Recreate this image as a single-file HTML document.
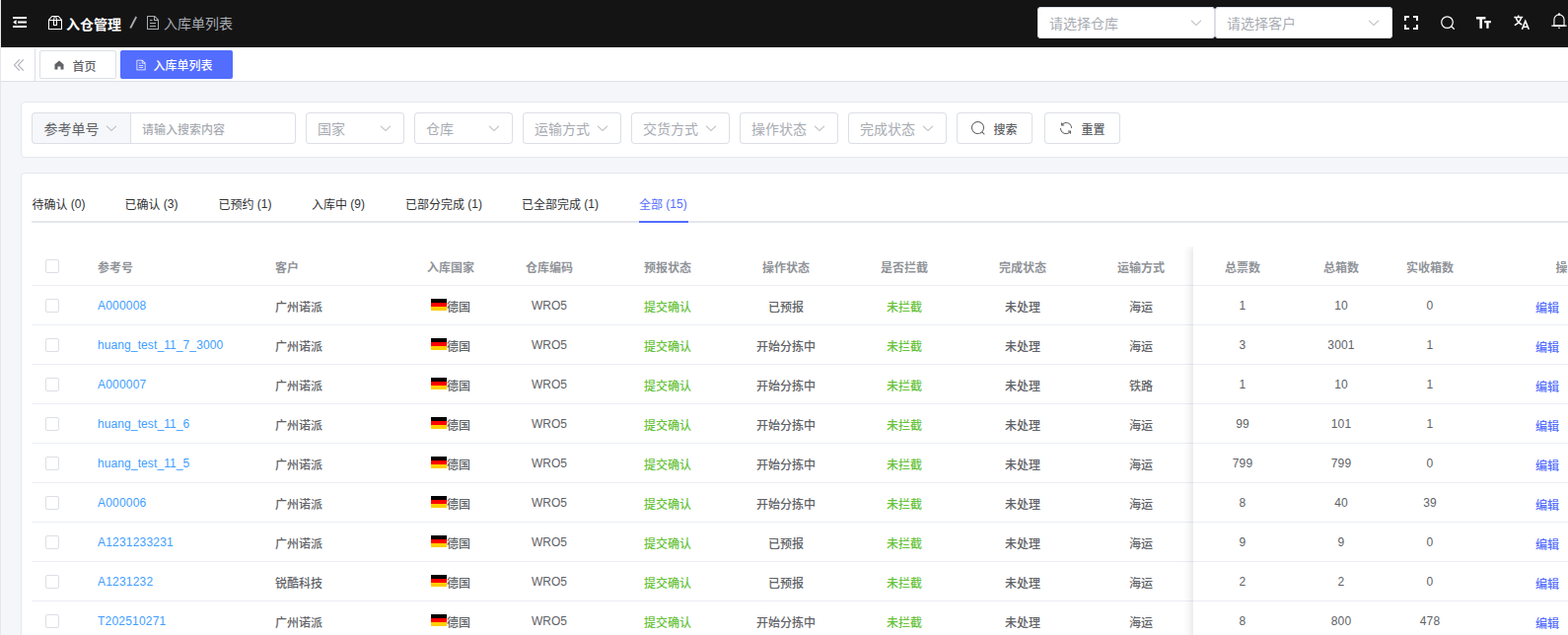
<!DOCTYPE html><html lang="zh-CN"><head><meta charset="utf-8"><title>入库单列表</title><style>
html,body{margin:0;padding:0}
body{width:1590px;height:644px;overflow:hidden;position:relative;background:#f5f6f9;font-family:"Liberation Sans","Noto Sans CJK SC",sans-serif;font-size:12px;color:#606266}
.a{position:absolute}
.f{display:flex;align-items:center;white-space:nowrap}
.jc{justify-content:center}
.t{display:inline-flex;align-items:center;white-space:pre}
.s14{font-size:14px}
.s12{font-size:12px}
.b{font-weight:700}
.m{font-weight:500}
.ic{display:block}
</style></head><body><div class="a" style="left:0px;top:0px;width:1590px;height:48px;background:#141414;overflow:hidden"><div class="a" style="left:13px;top:17.4px;color:#fff"><svg class="ic" style="width:14px;height:14px;height:11px" viewBox="0 0 14 11"><path fill="currentColor" d="M0 0h14v2H0zM5 4.500h9v2H5zM0 9h14v2H0zM3.600 3v5L0.200 5.500z"/></svg></div><div class="a" style="left:47.5px;top:14.5px;color:#fff"><svg class="ic" style="width:16px;height:16px;" viewBox="0 0 1024 1024"><path fill="currentColor" d="M317.056 128 128 344.064V896h768V344.064L706.944 128H317.056zm-14.528-64h418.944a32 32 0 0 1 24.064 10.88l206.528 236.096A32 32 0 0 1 960 332.032V928a32 32 0 0 1-32 32H96a32 32 0 0 1-32-32V332.032a32 32 0 0 1 7.936-21.12L278.4 75.008A32 32 0 0 1 302.528 64z"/><path fill="currentColor" d="M64 320h896v64H64z"/><path fill="currentColor" d="M448 327.872V640h128V327.872L526.08 128h-28.16L448 327.872zM448 64h128l64 256v352a32 32 0 0 1-32 32H416a32 32 0 0 1-32-32V320l64-256z"/></svg></div><div class="a f" style="left:67px;top:16.5px;height:14px;color:#fff"><span class="t"><span class="s14 b">入仓管理</span></span></div><div class="a" style="left:131px;top:14px;"><svg width="9" height="16" viewBox="0 0 9 16"><path d="M7.2 3 1.2 14.5" stroke="#a8abb2" stroke-width="1.8" fill="none"/></svg></div><div class="a" style="left:146.5px;top:14.5px;color:#a8abb2"><svg class="ic" style="width:16px;height:16px;" viewBox="0 0 1024 1024"><path fill="currentColor" d="M832 384H576V128H192v768h640V384zm-26.496-64L640 154.496V320h165.504zM160 64h480l256 256v608a32 32 0 0 1-32 32H160a32 32 0 0 1-32-32V96a32 32 0 0 1 32-32zm160 448h384v64H320v-64zm0-192h160v64H320v-64zm0 384h384v64H320v-64z"/></svg></div><div class="a f" style="left:166px;top:16px;height:14px;color:#a8abb2"><span class="t"><span class="s14">入库单列表</span></span></div><div class="a" style="left:1052px;top:7px;width:180px;height:32px;background:#fff;border-radius:4px;box-shadow:inset 0 0 0 1px #dcdfe6"><div class="a f" style="left:12px;top:0px;height:32px;color:#a8abb2"><span class="t"><span class="s14">请选择仓库</span></span></div><div class="a" style="left:154px;top:9px;color:#a8abb2"><svg class="ic" style="width:14px;height:14px;" viewBox="0 0 1024 1024"><path fill="currentColor" d="M831.872 340.864 512 652.672 192.128 340.864a30.592 30.592 0 0 0-42.752 0 29.12 29.12 0 0 0 0 41.6L489.664 714.24a32 32 0 0 0 44.672 0l340.288-331.712a29.12 29.12 0 0 0 0-41.728 30.592 30.592 0 0 0-42.752 0z"/></svg></div></div><div class="a" style="left:1232px;top:7px;width:180px;height:32px;background:#fff;border-radius:4px;box-shadow:inset 0 0 0 1px #dcdfe6"><div class="a f" style="left:12px;top:0px;height:32px;color:#a8abb2"><span class="t"><span class="s14">请选择客户</span></span></div><div class="a" style="left:154px;top:9px;color:#a8abb2"><svg class="ic" style="width:14px;height:14px;" viewBox="0 0 1024 1024"><path fill="currentColor" d="M831.872 340.864 512 652.672 192.128 340.864a30.592 30.592 0 0 0-42.752 0 29.12 29.12 0 0 0 0 41.6L489.664 714.24a32 32 0 0 0 44.672 0l340.288-331.712a29.12 29.12 0 0 0 0-41.728 30.592 30.592 0 0 0-42.752 0z"/></svg></div></div><div class="a" style="left:1424px;top:16px;color:#fff"><svg class="ic" style="width:14px;height:14px;" viewBox="0 0 14 14"><path fill="none" stroke="currentColor" stroke-width="2" d="M1 5V1h4M9 1h4v4M13 9v4H9M5 13H1V9"/></svg></div><div class="a" style="left:1460.5px;top:16px;color:#fff"><svg class="ic" style="width:14px;height:14px;" viewBox="0 0 14 14"><circle cx="6.5" cy="6.6" r="5.8" fill="none" stroke="currentColor" stroke-width="1.2"/><path stroke="currentColor" stroke-width="1.3" stroke-linecap="round" d="M10.9 10.9 13.3 13.3"/></svg></div><div class="a" style="left:1497px;top:17px;color:#fff"><svg class="ic" style="width:15px;height:15px;height:12px" viewBox="0 0 15 12"><path fill="currentColor" d="M0 0h9.4v2.4H6v9.4H3.4V2.4H0zM8.2 4h6.6v2.2h-2.2v5.6h-2.3V6.200H8.200z"/></svg></div><div class="a" style="left:1535px;top:15px;color:#fff"><svg class="ic" style="width:16px;height:16px;height:15px" viewBox="0 0 16 15"><path fill="none" stroke="currentColor" stroke-width="1.5" d="M0.300 2.6H9.200M4.700 0.500V2.600M7.600 2.600C6.800 6.200 4 9 0.800 10.700M2.200 2.800C3 6 5.400 8.600 8.300 10"/><path fill="none" stroke="currentColor" stroke-width="1.6" d="M8.400 14.800 11.800 6.300 15.300 14.800M9.600 12.200H14.100"/></svg></div><div class="a" style="left:1572px;top:12px;color:#fff"><svg class="ic" style="width:18px;height:18px;" viewBox="0 0 1024 1024"><path fill="currentColor" d="M512 64a64 64 0 0 1 64 64v64H448v-64a64 64 0 0 1 64-64z"/><path fill="currentColor" d="M256 768h512V448a256 256 0 1 0-512 0v320zm256-640a320 320 0 0 1 320 320v384H192V448a320 320 0 0 1 320-320z"/><path fill="currentColor" d="M96 768h832q32 0 32 32t-32 32H96q-32 0-32-32t32-32zm352 128h128a64 64 0 0 1-128 0z"/></svg></div></div><div class="a" style="left:1px;top:48px;width:1589px;height:34px;background:#fff;border-bottom:1px solid #dcdfe6"><div class="a" style="left:10px;top:10.2px;color:#a0a3aa"><svg class="ic" style="width:16px;height:16px;" viewBox="0 0 1024 1024"><path fill="currentColor" d="M529.408 149.376a29.12 29.12 0 0 1 41.728 0 30.592 30.592 0 0 1 0 42.688L259.264 511.936l311.872 319.936a30.592 30.592 0 0 1-.512 43.264 29.12 29.12 0 0 1-41.216-.512L197.76 534.272a32 32 0 0 1 0-44.672l331.648-340.224zm256 0a29.12 29.12 0 0 1 41.728 0 30.592 30.592 0 0 1 0 42.688L515.264 511.936l311.872 319.936a30.592 30.592 0 0 1-.512 43.264 29.12 29.12 0 0 1-41.216-.512L453.76 534.272a32 32 0 0 1 0-44.672l331.648-340.224z"/></svg></div><div class="a" style="left:34px;top:1px;width:1px;height:33px;background:#dcdfe6"></div><div class="a" style="left:39px;top:3px;width:78px;height:29px;box-sizing:border-box;border:1px solid #dcdfe6;border-radius:2px;background:#fff"><div class="a" style="left:13px;top:7.5px;color:#606266"><svg class="ic" style="width:12px;height:12px;" viewBox="0 0 1024 1024"><path fill="currentColor" d="M512 128 128 447.936V896h255.936V640H640v256h255.936V447.936z"/></svg></div><div class="a f" style="left:32.5px;top:0px;height:28px;color:#606266"><span class="t"><span class="s12 m">首页</span></span></div></div><div class="a" style="left:121px;top:3px;width:114px;height:29px;border-radius:2px;background:#536dfe"><div class="a" style="left:14.5px;top:8.5px;color:#fff"><svg class="ic" style="width:12px;height:12px;" viewBox="0 0 1024 1024"><path fill="currentColor" d="M832 384H576V128H192v768h640V384zm-26.496-64L640 154.496V320h165.504zM160 64h480l256 256v608a32 32 0 0 1-32 32H160a32 32 0 0 1-32-32V96a32 32 0 0 1 32-32zm160 448h384v64H320v-64zm0-192h160v64H320v-64zm0 384h384v64H320v-64z"/></svg></div><div class="a f" style="left:33.5px;top:0px;height:29px;color:#fff"><span class="t"><span class="s12 m">入库单列表</span></span></div></div></div><div class="a" style="left:21px;top:103px;width:1600px;height:55px;background:#fff;border:1px solid #e4e7ed;border-radius:4px"><div class="a" style="left:10px;top:10px;width:101px;height:32px;background:#f5f7fa;border-radius:4px 0 0 4px;box-shadow:inset 0 0 0 1px #dcdfe6"><div class="a f" style="left:12.5px;top:0px;height:32px;color:#606266"><span class="t"><span class="s14">参考单号</span></span></div><div class="a" style="left:74px;top:9px;color:#a8abb2"><svg class="ic" style="width:14px;height:14px;" viewBox="0 0 1024 1024"><path fill="currentColor" d="M831.872 340.864 512 652.672 192.128 340.864a30.592 30.592 0 0 0-42.752 0 29.12 29.12 0 0 0 0 41.6L489.664 714.24a32 32 0 0 0 44.672 0l340.288-331.712a29.12 29.12 0 0 0 0-41.728 30.592 30.592 0 0 0-42.752 0z"/></svg></div></div><div class="a" style="left:110px;top:10px;width:168px;height:32px;background:#fff;border-radius:0 4px 4px 0;box-shadow:inset 0 0 0 1px #dcdfe6"><div class="a f" style="left:12px;top:0px;height:32px;color:#a8abb2"><span class="t"><span class="s12 m">请输入搜索内容</span></span></div></div><div class="a" style="left:288px;top:10px;width:100px;height:32px;background:#fff;border-radius:4px;box-shadow:inset 0 0 0 1px #dcdfe6"><div class="a f" style="left:12px;top:0px;height:32px;color:#a8abb2"><span class="t"><span class="s14">国家</span></span></div><div class="a" style="left:74px;top:9px;color:#a8abb2"><svg class="ic" style="width:14px;height:14px;" viewBox="0 0 1024 1024"><path fill="currentColor" d="M831.872 340.864 512 652.672 192.128 340.864a30.592 30.592 0 0 0-42.752 0 29.12 29.12 0 0 0 0 41.6L489.664 714.24a32 32 0 0 0 44.672 0l340.288-331.712a29.12 29.12 0 0 0 0-41.728 30.592 30.592 0 0 0-42.752 0z"/></svg></div></div><div class="a" style="left:398px;top:10px;width:100px;height:32px;background:#fff;border-radius:4px;box-shadow:inset 0 0 0 1px #dcdfe6"><div class="a f" style="left:12px;top:0px;height:32px;color:#a8abb2"><span class="t"><span class="s14">仓库</span></span></div><div class="a" style="left:74px;top:9px;color:#a8abb2"><svg class="ic" style="width:14px;height:14px;" viewBox="0 0 1024 1024"><path fill="currentColor" d="M831.872 340.864 512 652.672 192.128 340.864a30.592 30.592 0 0 0-42.752 0 29.12 29.12 0 0 0 0 41.6L489.664 714.24a32 32 0 0 0 44.672 0l340.288-331.712a29.12 29.12 0 0 0 0-41.728 30.592 30.592 0 0 0-42.752 0z"/></svg></div></div><div class="a" style="left:508px;top:10px;width:100px;height:32px;background:#fff;border-radius:4px;box-shadow:inset 0 0 0 1px #dcdfe6"><div class="a f" style="left:12px;top:0px;height:32px;color:#a8abb2"><span class="t"><span class="s14">运输方式</span></span></div><div class="a" style="left:74px;top:9px;color:#a8abb2"><svg class="ic" style="width:14px;height:14px;" viewBox="0 0 1024 1024"><path fill="currentColor" d="M831.872 340.864 512 652.672 192.128 340.864a30.592 30.592 0 0 0-42.752 0 29.12 29.12 0 0 0 0 41.6L489.664 714.24a32 32 0 0 0 44.672 0l340.288-331.712a29.12 29.12 0 0 0 0-41.728 30.592 30.592 0 0 0-42.752 0z"/></svg></div></div><div class="a" style="left:618px;top:10px;width:100px;height:32px;background:#fff;border-radius:4px;box-shadow:inset 0 0 0 1px #dcdfe6"><div class="a f" style="left:12px;top:0px;height:32px;color:#a8abb2"><span class="t"><span class="s14">交货方式</span></span></div><div class="a" style="left:74px;top:9px;color:#a8abb2"><svg class="ic" style="width:14px;height:14px;" viewBox="0 0 1024 1024"><path fill="currentColor" d="M831.872 340.864 512 652.672 192.128 340.864a30.592 30.592 0 0 0-42.752 0 29.12 29.12 0 0 0 0 41.6L489.664 714.24a32 32 0 0 0 44.672 0l340.288-331.712a29.12 29.12 0 0 0 0-41.728 30.592 30.592 0 0 0-42.752 0z"/></svg></div></div><div class="a" style="left:728px;top:10px;width:100px;height:32px;background:#fff;border-radius:4px;box-shadow:inset 0 0 0 1px #dcdfe6"><div class="a f" style="left:12px;top:0px;height:32px;color:#a8abb2"><span class="t"><span class="s14">操作状态</span></span></div><div class="a" style="left:74px;top:9px;color:#a8abb2"><svg class="ic" style="width:14px;height:14px;" viewBox="0 0 1024 1024"><path fill="currentColor" d="M831.872 340.864 512 652.672 192.128 340.864a30.592 30.592 0 0 0-42.752 0 29.12 29.12 0 0 0 0 41.6L489.664 714.24a32 32 0 0 0 44.672 0l340.288-331.712a29.12 29.12 0 0 0 0-41.728 30.592 30.592 0 0 0-42.752 0z"/></svg></div></div><div class="a" style="left:838px;top:10px;width:100px;height:32px;background:#fff;border-radius:4px;box-shadow:inset 0 0 0 1px #dcdfe6"><div class="a f" style="left:12px;top:0px;height:32px;color:#a8abb2"><span class="t"><span class="s14">完成状态</span></span></div><div class="a" style="left:74px;top:9px;color:#a8abb2"><svg class="ic" style="width:14px;height:14px;" viewBox="0 0 1024 1024"><path fill="currentColor" d="M831.872 340.864 512 652.672 192.128 340.864a30.592 30.592 0 0 0-42.752 0 29.12 29.12 0 0 0 0 41.6L489.664 714.24a32 32 0 0 0 44.672 0l340.288-331.712a29.12 29.12 0 0 0 0-41.728 30.592 30.592 0 0 0-42.752 0z"/></svg></div></div><div class="a" style="left:948px;top:10px;width:77px;height:32px;background:#fff;border-radius:4px;box-shadow:inset 0 0 0 1px #dcdfe6"><div class="a" style="left:14px;top:8px;color:#606266"><svg class="ic" style="width:16px;height:16px;" viewBox="0 0 1024 1024"><path fill="currentColor" d="m795.904 750.72 124.992 124.928a32 32 0 0 1-45.248 45.248L750.656 795.904a416 416 0 1 1 45.248-45.248zM480 832a352 352 0 1 0 0-704 352 352 0 0 0 0 704z"/></svg></div><div class="a f" style="left:37.5px;top:0px;height:32px;color:#606266"><span class="t"><span class="s12 m">搜索</span></span></div></div><div class="a" style="left:1037px;top:10px;width:77px;height:32px;background:#fff;border-radius:4px;box-shadow:inset 0 0 0 1px #dcdfe6"><div class="a" style="left:14px;top:8px;color:#606266"><svg class="ic" style="width:16px;height:16px;" viewBox="0 0 1024 1024"><path fill="currentColor" d="M771.776 794.88A384 384 0 0 1 128 512h64a320 320 0 0 0 555.712 216.448H654.72a32 32 0 1 1 0-64h149.056a32 32 0 0 1 32 32v148.928a32 32 0 1 1-64 0v-50.56zM276.288 295.616h92.992a32 32 0 0 1 0 64H220.16a32 32 0 0 1-32-32V178.56a32 32 0 0 1 64 0v50.56A384 384 0 0 1 896.128 512h-64a320 320 0 0 0-555.776-216.384z"/></svg></div><div class="a f" style="left:37.5px;top:0px;height:32px;color:#606266"><span class="t"><span class="s12 m">重置</span></span></div></div></div><div class="a" style="left:21px;top:175px;width:1600px;height:600px;background:#fff;border:1px solid #e4e7ed;border-radius:4px"><div class="a f" style="left:10.5px;top:20px;height:21px;color:#303133"><span class="t"><span class="s12">待确认</span><span style="font-size:12px;"> (0)</span></span></div><div class="a f" style="left:104.5px;top:20px;height:21px;color:#303133"><span class="t"><span class="s12">已确认</span><span style="font-size:12px;"> (3)</span></span></div><div class="a f" style="left:199.5px;top:20px;height:21px;color:#303133"><span class="t"><span class="s12">已预约</span><span style="font-size:12px;"> (1)</span></span></div><div class="a f" style="left:294px;top:20px;height:21px;color:#303133"><span class="t"><span class="s12">入库中</span><span style="font-size:12px;"> (9)</span></span></div><div class="a f" style="left:389px;top:20px;height:21px;color:#303133"><span class="t"><span class="s12">已部分完成</span><span style="font-size:12px;"> (1)</span></span></div><div class="a f" style="left:507px;top:20px;height:21px;color:#303133"><span class="t"><span class="s12">已全部完成</span><span style="font-size:12px;"> (1)</span></span></div><div class="a f" style="left:626px;top:20px;height:21px;color:#536dfe"><span class="t"><span class="s12">全部</span><span style="font-size:12px;"> (15)</span></span></div><div class="a" style="left:10px;top:48px;width:1600px;height:2px;background:#e4e7ed"></div><div class="a" style="left:626px;top:48px;width:50px;height:2px;background:#536dfe"></div><div class="a" style="left:24px;top:87px;width:14px;height:14px;box-sizing:border-box;border:1px solid #dcdfe6;border-radius:2px;background:#fff"></div><div class="a f" style="left:77px;top:74px;height:40px;color:#909399"><span class="t"><span class="s12 b">参考号</span></span></div><div class="a f" style="left:257px;top:74px;height:40px;color:#909399"><span class="t"><span class="s12 b">客户</span></span></div><div class="a f jc" style="left:335px;top:74px;width:200px;height:40px;color:#909399"><span class="t"><span class="s12 b">入库国家</span></span></div><div class="a f jc" style="left:435px;top:74px;width:200px;height:40px;color:#909399"><span class="t"><span class="s12 b">仓库编码</span></span></div><div class="a f jc" style="left:555px;top:74px;width:200px;height:40px;color:#909399"><span class="t"><span class="s12 b">预报状态</span></span></div><div class="a f jc" style="left:675px;top:74px;width:200px;height:40px;color:#909399"><span class="t"><span class="s12 b">操作状态</span></span></div><div class="a f jc" style="left:795px;top:74px;width:200px;height:40px;color:#909399"><span class="t"><span class="s12 b">是否拦截</span></span></div><div class="a f jc" style="left:915px;top:74px;width:200px;height:40px;color:#909399"><span class="t"><span class="s12 b">完成状态</span></span></div><div class="a f jc" style="left:1035px;top:74px;width:200px;height:40px;color:#909399"><span class="t"><span class="s12 b">运输方式</span></span></div><div class="a" style="left:10px;top:113px;width:1600px;height:1px;background:#ebeef5"></div><div class="a" style="left:24px;top:127px;width:14px;height:14px;box-sizing:border-box;border:1px solid #dcdfe6;border-radius:2px;background:#fff"></div><div class="a f" style="left:77px;top:114px;height:40px;color:#409eff"><span class="t"><span style="font-size:12px;letter-spacing:0.2px;">A000008</span></span></div><div class="a f" style="left:257px;top:114px;height:40px;color:#606266"><span class="t"><span class="s12 m">广州诺派</span></span></div><div class="a f jc" style="left:335px;top:114px;width:200px;height:40px;color:#606266"><span style="display:inline-block;width:16px;height:12px;margin-bottom:2px;background:linear-gradient(#000 0 33.33%,#f00 33.33% 66.66%,#ffce00 66.66%)"></span><span class="t"><span class="s12 m">德国</span></span></div><div class="a f jc" style="left:435px;top:114px;width:200px;height:40px;color:#606266"><span class="t"><span style="font-size:12px;">WRO5</span></span></div><div class="a f jc" style="left:555px;top:114px;width:200px;height:40px;color:#67c23a"><span class="t"><span class="s12 m">提交确认</span></span></div><div class="a f jc" style="left:675px;top:114px;width:200px;height:40px;color:#606266"><span class="t"><span class="s12 m">已预报</span></span></div><div class="a f jc" style="left:795px;top:114px;width:200px;height:40px;color:#67c23a"><span class="t"><span class="s12 m">未拦截</span></span></div><div class="a f jc" style="left:915px;top:114px;width:200px;height:40px;color:#606266"><span class="t"><span class="s12 m">未处理</span></span></div><div class="a f jc" style="left:1035px;top:114px;width:200px;height:40px;color:#606266"><span class="t"><span class="s12 m">海运</span></span></div><div class="a" style="left:10px;top:153px;width:1600px;height:1px;background:#ebeef5"></div><div class="a" style="left:24px;top:167px;width:14px;height:14px;box-sizing:border-box;border:1px solid #dcdfe6;border-radius:2px;background:#fff"></div><div class="a f" style="left:77px;top:154px;height:40px;color:#409eff"><span class="t"><span style="font-size:12px;letter-spacing:0.1px;">huang_test_11_7_3000</span></span></div><div class="a f" style="left:257px;top:154px;height:40px;color:#606266"><span class="t"><span class="s12 m">广州诺派</span></span></div><div class="a f jc" style="left:335px;top:154px;width:200px;height:40px;color:#606266"><span style="display:inline-block;width:16px;height:12px;margin-bottom:2px;background:linear-gradient(#000 0 33.33%,#f00 33.33% 66.66%,#ffce00 66.66%)"></span><span class="t"><span class="s12 m">德国</span></span></div><div class="a f jc" style="left:435px;top:154px;width:200px;height:40px;color:#606266"><span class="t"><span style="font-size:12px;">WRO5</span></span></div><div class="a f jc" style="left:555px;top:154px;width:200px;height:40px;color:#67c23a"><span class="t"><span class="s12 m">提交确认</span></span></div><div class="a f jc" style="left:675px;top:154px;width:200px;height:40px;color:#606266"><span class="t"><span class="s12 m">开始分拣中</span></span></div><div class="a f jc" style="left:795px;top:154px;width:200px;height:40px;color:#67c23a"><span class="t"><span class="s12 m">未拦截</span></span></div><div class="a f jc" style="left:915px;top:154px;width:200px;height:40px;color:#606266"><span class="t"><span class="s12 m">未处理</span></span></div><div class="a f jc" style="left:1035px;top:154px;width:200px;height:40px;color:#606266"><span class="t"><span class="s12 m">海运</span></span></div><div class="a" style="left:10px;top:193px;width:1600px;height:1px;background:#ebeef5"></div><div class="a" style="left:24px;top:207px;width:14px;height:14px;box-sizing:border-box;border:1px solid #dcdfe6;border-radius:2px;background:#fff"></div><div class="a f" style="left:77px;top:194px;height:40px;color:#409eff"><span class="t"><span style="font-size:12px;letter-spacing:0.2px;">A000007</span></span></div><div class="a f" style="left:257px;top:194px;height:40px;color:#606266"><span class="t"><span class="s12 m">广州诺派</span></span></div><div class="a f jc" style="left:335px;top:194px;width:200px;height:40px;color:#606266"><span style="display:inline-block;width:16px;height:12px;margin-bottom:2px;background:linear-gradient(#000 0 33.33%,#f00 33.33% 66.66%,#ffce00 66.66%)"></span><span class="t"><span class="s12 m">德国</span></span></div><div class="a f jc" style="left:435px;top:194px;width:200px;height:40px;color:#606266"><span class="t"><span style="font-size:12px;">WRO5</span></span></div><div class="a f jc" style="left:555px;top:194px;width:200px;height:40px;color:#67c23a"><span class="t"><span class="s12 m">提交确认</span></span></div><div class="a f jc" style="left:675px;top:194px;width:200px;height:40px;color:#606266"><span class="t"><span class="s12 m">开始分拣中</span></span></div><div class="a f jc" style="left:795px;top:194px;width:200px;height:40px;color:#67c23a"><span class="t"><span class="s12 m">未拦截</span></span></div><div class="a f jc" style="left:915px;top:194px;width:200px;height:40px;color:#606266"><span class="t"><span class="s12 m">未处理</span></span></div><div class="a f jc" style="left:1035px;top:194px;width:200px;height:40px;color:#606266"><span class="t"><span class="s12 m">铁路</span></span></div><div class="a" style="left:10px;top:233px;width:1600px;height:1px;background:#ebeef5"></div><div class="a" style="left:24px;top:247px;width:14px;height:14px;box-sizing:border-box;border:1px solid #dcdfe6;border-radius:2px;background:#fff"></div><div class="a f" style="left:77px;top:234px;height:40px;color:#409eff"><span class="t"><span style="font-size:12px;letter-spacing:0.1px;">huang_test_11_6</span></span></div><div class="a f" style="left:257px;top:234px;height:40px;color:#606266"><span class="t"><span class="s12 m">广州诺派</span></span></div><div class="a f jc" style="left:335px;top:234px;width:200px;height:40px;color:#606266"><span style="display:inline-block;width:16px;height:12px;margin-bottom:2px;background:linear-gradient(#000 0 33.33%,#f00 33.33% 66.66%,#ffce00 66.66%)"></span><span class="t"><span class="s12 m">德国</span></span></div><div class="a f jc" style="left:435px;top:234px;width:200px;height:40px;color:#606266"><span class="t"><span style="font-size:12px;">WRO5</span></span></div><div class="a f jc" style="left:555px;top:234px;width:200px;height:40px;color:#67c23a"><span class="t"><span class="s12 m">提交确认</span></span></div><div class="a f jc" style="left:675px;top:234px;width:200px;height:40px;color:#606266"><span class="t"><span class="s12 m">开始分拣中</span></span></div><div class="a f jc" style="left:795px;top:234px;width:200px;height:40px;color:#67c23a"><span class="t"><span class="s12 m">未拦截</span></span></div><div class="a f jc" style="left:915px;top:234px;width:200px;height:40px;color:#606266"><span class="t"><span class="s12 m">未处理</span></span></div><div class="a f jc" style="left:1035px;top:234px;width:200px;height:40px;color:#606266"><span class="t"><span class="s12 m">海运</span></span></div><div class="a" style="left:10px;top:273px;width:1600px;height:1px;background:#ebeef5"></div><div class="a" style="left:24px;top:287px;width:14px;height:14px;box-sizing:border-box;border:1px solid #dcdfe6;border-radius:2px;background:#fff"></div><div class="a f" style="left:77px;top:274px;height:40px;color:#409eff"><span class="t"><span style="font-size:12px;letter-spacing:0.1px;">huang_test_11_5</span></span></div><div class="a f" style="left:257px;top:274px;height:40px;color:#606266"><span class="t"><span class="s12 m">广州诺派</span></span></div><div class="a f jc" style="left:335px;top:274px;width:200px;height:40px;color:#606266"><span style="display:inline-block;width:16px;height:12px;margin-bottom:2px;background:linear-gradient(#000 0 33.33%,#f00 33.33% 66.66%,#ffce00 66.66%)"></span><span class="t"><span class="s12 m">德国</span></span></div><div class="a f jc" style="left:435px;top:274px;width:200px;height:40px;color:#606266"><span class="t"><span style="font-size:12px;">WRO5</span></span></div><div class="a f jc" style="left:555px;top:274px;width:200px;height:40px;color:#67c23a"><span class="t"><span class="s12 m">提交确认</span></span></div><div class="a f jc" style="left:675px;top:274px;width:200px;height:40px;color:#606266"><span class="t"><span class="s12 m">开始分拣中</span></span></div><div class="a f jc" style="left:795px;top:274px;width:200px;height:40px;color:#67c23a"><span class="t"><span class="s12 m">未拦截</span></span></div><div class="a f jc" style="left:915px;top:274px;width:200px;height:40px;color:#606266"><span class="t"><span class="s12 m">未处理</span></span></div><div class="a f jc" style="left:1035px;top:274px;width:200px;height:40px;color:#606266"><span class="t"><span class="s12 m">海运</span></span></div><div class="a" style="left:10px;top:313px;width:1600px;height:1px;background:#ebeef5"></div><div class="a" style="left:24px;top:327px;width:14px;height:14px;box-sizing:border-box;border:1px solid #dcdfe6;border-radius:2px;background:#fff"></div><div class="a f" style="left:77px;top:314px;height:40px;color:#409eff"><span class="t"><span style="font-size:12px;letter-spacing:0.2px;">A000006</span></span></div><div class="a f" style="left:257px;top:314px;height:40px;color:#606266"><span class="t"><span class="s12 m">广州诺派</span></span></div><div class="a f jc" style="left:335px;top:314px;width:200px;height:40px;color:#606266"><span style="display:inline-block;width:16px;height:12px;margin-bottom:2px;background:linear-gradient(#000 0 33.33%,#f00 33.33% 66.66%,#ffce00 66.66%)"></span><span class="t"><span class="s12 m">德国</span></span></div><div class="a f jc" style="left:435px;top:314px;width:200px;height:40px;color:#606266"><span class="t"><span style="font-size:12px;">WRO5</span></span></div><div class="a f jc" style="left:555px;top:314px;width:200px;height:40px;color:#67c23a"><span class="t"><span class="s12 m">提交确认</span></span></div><div class="a f jc" style="left:675px;top:314px;width:200px;height:40px;color:#606266"><span class="t"><span class="s12 m">开始分拣中</span></span></div><div class="a f jc" style="left:795px;top:314px;width:200px;height:40px;color:#67c23a"><span class="t"><span class="s12 m">未拦截</span></span></div><div class="a f jc" style="left:915px;top:314px;width:200px;height:40px;color:#606266"><span class="t"><span class="s12 m">未处理</span></span></div><div class="a f jc" style="left:1035px;top:314px;width:200px;height:40px;color:#606266"><span class="t"><span class="s12 m">海运</span></span></div><div class="a" style="left:10px;top:353px;width:1600px;height:1px;background:#ebeef5"></div><div class="a" style="left:24px;top:367px;width:14px;height:14px;box-sizing:border-box;border:1px solid #dcdfe6;border-radius:2px;background:#fff"></div><div class="a f" style="left:77px;top:354px;height:40px;color:#409eff"><span class="t"><span style="font-size:12px;letter-spacing:0.2px;">A1231233231</span></span></div><div class="a f" style="left:257px;top:354px;height:40px;color:#606266"><span class="t"><span class="s12 m">广州诺派</span></span></div><div class="a f jc" style="left:335px;top:354px;width:200px;height:40px;color:#606266"><span style="display:inline-block;width:16px;height:12px;margin-bottom:2px;background:linear-gradient(#000 0 33.33%,#f00 33.33% 66.66%,#ffce00 66.66%)"></span><span class="t"><span class="s12 m">德国</span></span></div><div class="a f jc" style="left:435px;top:354px;width:200px;height:40px;color:#606266"><span class="t"><span style="font-size:12px;">WRO5</span></span></div><div class="a f jc" style="left:555px;top:354px;width:200px;height:40px;color:#67c23a"><span class="t"><span class="s12 m">提交确认</span></span></div><div class="a f jc" style="left:675px;top:354px;width:200px;height:40px;color:#606266"><span class="t"><span class="s12 m">已预报</span></span></div><div class="a f jc" style="left:795px;top:354px;width:200px;height:40px;color:#67c23a"><span class="t"><span class="s12 m">未拦截</span></span></div><div class="a f jc" style="left:915px;top:354px;width:200px;height:40px;color:#606266"><span class="t"><span class="s12 m">未处理</span></span></div><div class="a f jc" style="left:1035px;top:354px;width:200px;height:40px;color:#606266"><span class="t"><span class="s12 m">海运</span></span></div><div class="a" style="left:10px;top:393px;width:1600px;height:1px;background:#ebeef5"></div><div class="a" style="left:24px;top:407px;width:14px;height:14px;box-sizing:border-box;border:1px solid #dcdfe6;border-radius:2px;background:#fff"></div><div class="a f" style="left:77px;top:394px;height:40px;color:#409eff"><span class="t"><span style="font-size:12px;letter-spacing:0.2px;">A1231232</span></span></div><div class="a f" style="left:257px;top:394px;height:40px;color:#606266"><span class="t"><span class="s12 m">锐酷科技</span></span></div><div class="a f jc" style="left:335px;top:394px;width:200px;height:40px;color:#606266"><span style="display:inline-block;width:16px;height:12px;margin-bottom:2px;background:linear-gradient(#000 0 33.33%,#f00 33.33% 66.66%,#ffce00 66.66%)"></span><span class="t"><span class="s12 m">德国</span></span></div><div class="a f jc" style="left:435px;top:394px;width:200px;height:40px;color:#606266"><span class="t"><span style="font-size:12px;">WRO5</span></span></div><div class="a f jc" style="left:555px;top:394px;width:200px;height:40px;color:#67c23a"><span class="t"><span class="s12 m">提交确认</span></span></div><div class="a f jc" style="left:675px;top:394px;width:200px;height:40px;color:#606266"><span class="t"><span class="s12 m">已预报</span></span></div><div class="a f jc" style="left:795px;top:394px;width:200px;height:40px;color:#67c23a"><span class="t"><span class="s12 m">未拦截</span></span></div><div class="a f jc" style="left:915px;top:394px;width:200px;height:40px;color:#606266"><span class="t"><span class="s12 m">未处理</span></span></div><div class="a f jc" style="left:1035px;top:394px;width:200px;height:40px;color:#606266"><span class="t"><span class="s12 m">海运</span></span></div><div class="a" style="left:10px;top:433px;width:1600px;height:1px;background:#ebeef5"></div><div class="a" style="left:24px;top:447px;width:14px;height:14px;box-sizing:border-box;border:1px solid #dcdfe6;border-radius:2px;background:#fff"></div><div class="a f" style="left:77px;top:434px;height:40px;color:#409eff"><span class="t"><span style="font-size:12px;letter-spacing:0.2px;">T202510271</span></span></div><div class="a f" style="left:257px;top:434px;height:40px;color:#606266"><span class="t"><span class="s12 m">广州诺派</span></span></div><div class="a f jc" style="left:335px;top:434px;width:200px;height:40px;color:#606266"><span style="display:inline-block;width:16px;height:12px;margin-bottom:2px;background:linear-gradient(#000 0 33.33%,#f00 33.33% 66.66%,#ffce00 66.66%)"></span><span class="t"><span class="s12 m">德国</span></span></div><div class="a f jc" style="left:435px;top:434px;width:200px;height:40px;color:#606266"><span class="t"><span style="font-size:12px;">WRO5</span></span></div><div class="a f jc" style="left:555px;top:434px;width:200px;height:40px;color:#67c23a"><span class="t"><span class="s12 m">提交确认</span></span></div><div class="a f jc" style="left:675px;top:434px;width:200px;height:40px;color:#606266"><span class="t"><span class="s12 m">开始分拣中</span></span></div><div class="a f jc" style="left:795px;top:434px;width:200px;height:40px;color:#67c23a"><span class="t"><span class="s12 m">未拦截</span></span></div><div class="a f jc" style="left:915px;top:434px;width:200px;height:40px;color:#606266"><span class="t"><span class="s12 m">未处理</span></span></div><div class="a f jc" style="left:1035px;top:434px;width:200px;height:40px;color:#606266"><span class="t"><span class="s12 m">海运</span></span></div><div class="a" style="left:10px;top:473px;width:1600px;height:1px;background:#ebeef5"></div><div class="a" style="left:1188px;top:74px;width:400px;height:500px;background:#fff;box-shadow:-3px 0 8px rgba(0,0,0,.10);clip-path:inset(0 0 0 -12px)"><div class="a f jc" style="left:-50px;top:0px;width:200px;height:40px;color:#909399"><span class="t"><span class="s12 b">总票数</span></span></div><div class="a f jc" style="left:50px;top:0px;width:200px;height:40px;color:#909399"><span class="t"><span class="s12 b">总箱数</span></span></div><div class="a f jc" style="left:140px;top:0px;width:200px;height:40px;color:#909399"><span class="t"><span class="s12 b">实收箱数</span></span></div><div class="a f" style="left:367.5px;top:0px;height:40px;color:#909399"><span class="t"><span class="s12 b">操作</span></span></div><div class="a" style="left:0px;top:39px;width:400px;height:1px;background:#ebeef5"></div><div class="a f jc" style="left:-50px;top:40px;width:200px;height:40px;color:#606266"><span class="t"><span style="font-size:12px;letter-spacing:0.15px;">1</span></span></div><div class="a f jc" style="left:50px;top:40px;width:200px;height:40px;color:#606266"><span class="t"><span style="font-size:12px;letter-spacing:0.15px;">10</span></span></div><div class="a f jc" style="left:140px;top:40px;width:200px;height:40px;color:#606266"><span class="t"><span style="font-size:12px;letter-spacing:0.15px;">0</span></span></div><div class="a f" style="left:347px;top:41.5px;height:40px;color:#536dfe"><span class="t"><span class="s12 m">编辑</span></span></div><div class="a" style="left:0px;top:79px;width:400px;height:1px;background:#ebeef5"></div><div class="a f jc" style="left:-50px;top:80px;width:200px;height:40px;color:#606266"><span class="t"><span style="font-size:12px;letter-spacing:0.15px;">3</span></span></div><div class="a f jc" style="left:50px;top:80px;width:200px;height:40px;color:#606266"><span class="t"><span style="font-size:12px;letter-spacing:0.15px;">3001</span></span></div><div class="a f jc" style="left:140px;top:80px;width:200px;height:40px;color:#606266"><span class="t"><span style="font-size:12px;letter-spacing:0.15px;">1</span></span></div><div class="a f" style="left:347px;top:81.5px;height:40px;color:#536dfe"><span class="t"><span class="s12 m">编辑</span></span></div><div class="a" style="left:0px;top:119px;width:400px;height:1px;background:#ebeef5"></div><div class="a f jc" style="left:-50px;top:120px;width:200px;height:40px;color:#606266"><span class="t"><span style="font-size:12px;letter-spacing:0.15px;">1</span></span></div><div class="a f jc" style="left:50px;top:120px;width:200px;height:40px;color:#606266"><span class="t"><span style="font-size:12px;letter-spacing:0.15px;">10</span></span></div><div class="a f jc" style="left:140px;top:120px;width:200px;height:40px;color:#606266"><span class="t"><span style="font-size:12px;letter-spacing:0.15px;">1</span></span></div><div class="a f" style="left:347px;top:121.5px;height:40px;color:#536dfe"><span class="t"><span class="s12 m">编辑</span></span></div><div class="a" style="left:0px;top:159px;width:400px;height:1px;background:#ebeef5"></div><div class="a f jc" style="left:-50px;top:160px;width:200px;height:40px;color:#606266"><span class="t"><span style="font-size:12px;letter-spacing:0.15px;">99</span></span></div><div class="a f jc" style="left:50px;top:160px;width:200px;height:40px;color:#606266"><span class="t"><span style="font-size:12px;letter-spacing:0.15px;">101</span></span></div><div class="a f jc" style="left:140px;top:160px;width:200px;height:40px;color:#606266"><span class="t"><span style="font-size:12px;letter-spacing:0.15px;">1</span></span></div><div class="a f" style="left:347px;top:161.5px;height:40px;color:#536dfe"><span class="t"><span class="s12 m">编辑</span></span></div><div class="a" style="left:0px;top:199px;width:400px;height:1px;background:#ebeef5"></div><div class="a f jc" style="left:-50px;top:200px;width:200px;height:40px;color:#606266"><span class="t"><span style="font-size:12px;letter-spacing:0.15px;">799</span></span></div><div class="a f jc" style="left:50px;top:200px;width:200px;height:40px;color:#606266"><span class="t"><span style="font-size:12px;letter-spacing:0.15px;">799</span></span></div><div class="a f jc" style="left:140px;top:200px;width:200px;height:40px;color:#606266"><span class="t"><span style="font-size:12px;letter-spacing:0.15px;">0</span></span></div><div class="a f" style="left:347px;top:201.5px;height:40px;color:#536dfe"><span class="t"><span class="s12 m">编辑</span></span></div><div class="a" style="left:0px;top:239px;width:400px;height:1px;background:#ebeef5"></div><div class="a f jc" style="left:-50px;top:240px;width:200px;height:40px;color:#606266"><span class="t"><span style="font-size:12px;letter-spacing:0.15px;">8</span></span></div><div class="a f jc" style="left:50px;top:240px;width:200px;height:40px;color:#606266"><span class="t"><span style="font-size:12px;letter-spacing:0.15px;">40</span></span></div><div class="a f jc" style="left:140px;top:240px;width:200px;height:40px;color:#606266"><span class="t"><span style="font-size:12px;letter-spacing:0.15px;">39</span></span></div><div class="a f" style="left:347px;top:241.5px;height:40px;color:#536dfe"><span class="t"><span class="s12 m">编辑</span></span></div><div class="a" style="left:0px;top:279px;width:400px;height:1px;background:#ebeef5"></div><div class="a f jc" style="left:-50px;top:280px;width:200px;height:40px;color:#606266"><span class="t"><span style="font-size:12px;letter-spacing:0.15px;">9</span></span></div><div class="a f jc" style="left:50px;top:280px;width:200px;height:40px;color:#606266"><span class="t"><span style="font-size:12px;letter-spacing:0.15px;">9</span></span></div><div class="a f jc" style="left:140px;top:280px;width:200px;height:40px;color:#606266"><span class="t"><span style="font-size:12px;letter-spacing:0.15px;">0</span></span></div><div class="a f" style="left:347px;top:281.5px;height:40px;color:#536dfe"><span class="t"><span class="s12 m">编辑</span></span></div><div class="a" style="left:0px;top:319px;width:400px;height:1px;background:#ebeef5"></div><div class="a f jc" style="left:-50px;top:320px;width:200px;height:40px;color:#606266"><span class="t"><span style="font-size:12px;letter-spacing:0.15px;">2</span></span></div><div class="a f jc" style="left:50px;top:320px;width:200px;height:40px;color:#606266"><span class="t"><span style="font-size:12px;letter-spacing:0.15px;">2</span></span></div><div class="a f jc" style="left:140px;top:320px;width:200px;height:40px;color:#606266"><span class="t"><span style="font-size:12px;letter-spacing:0.15px;">0</span></span></div><div class="a f" style="left:347px;top:321.5px;height:40px;color:#536dfe"><span class="t"><span class="s12 m">编辑</span></span></div><div class="a" style="left:0px;top:359px;width:400px;height:1px;background:#ebeef5"></div><div class="a f jc" style="left:-50px;top:360px;width:200px;height:40px;color:#606266"><span class="t"><span style="font-size:12px;letter-spacing:0.15px;">8</span></span></div><div class="a f jc" style="left:50px;top:360px;width:200px;height:40px;color:#606266"><span class="t"><span style="font-size:12px;letter-spacing:0.15px;">800</span></span></div><div class="a f jc" style="left:140px;top:360px;width:200px;height:40px;color:#606266"><span class="t"><span style="font-size:12px;letter-spacing:0.15px;">478</span></span></div><div class="a f" style="left:347px;top:361.5px;height:40px;color:#536dfe"><span class="t"><span class="s12 m">编辑</span></span></div><div class="a" style="left:0px;top:399px;width:400px;height:1px;background:#ebeef5"></div></div></div><div class="a" style="left:0px;top:0px;width:1px;height:644px;background:#e4e7ed"></div></body></html>
